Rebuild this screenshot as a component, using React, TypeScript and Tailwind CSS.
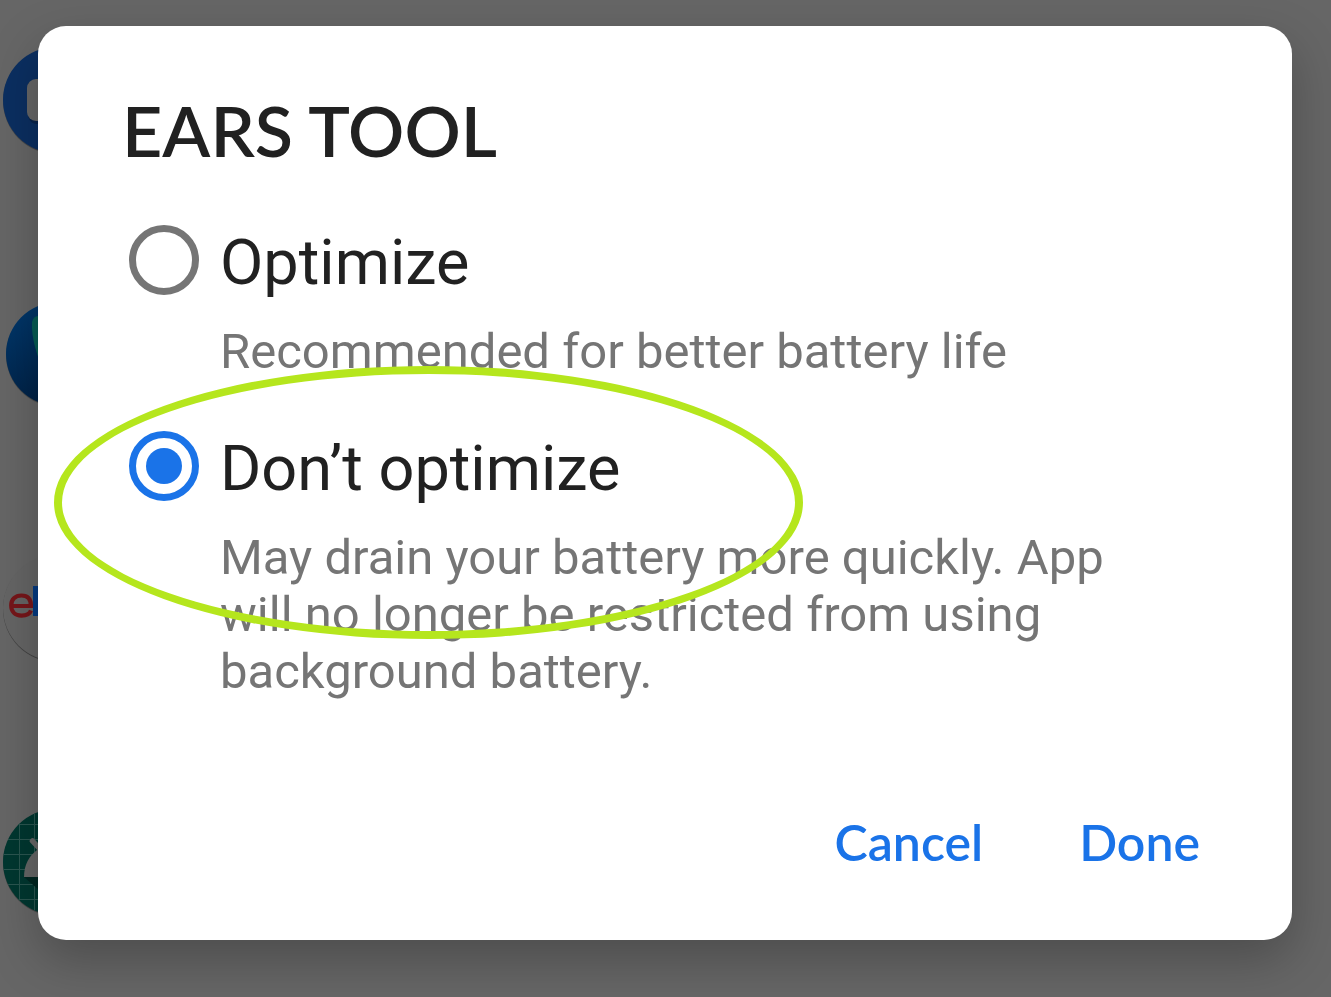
import { useState } from "react";

function MessagesIcon() {
  return (
    <svg className="h-[106px] w-[106px]" viewBox="0 0 106 106" aria-hidden="true">
      <circle cx="53" cy="54" r="53" fill="#484848" />
      <circle cx="53" cy="53" r="53" fill="#0b2f61" />
      <path d="M25 67c0 6 4 10 9 10h40V36H25z" fill="#08244b" />
      <rect x="24" y="32" width="58" height="42" rx="9" fill="#666666" />
    </svg>
  );
}

function LeafIcon() {
  return (
    <svg className="h-[106px] w-[106px]" viewBox="0 0 106 106" aria-hidden="true">
      <defs>
        <linearGradient id="leaf-sky" x1="0" y1="0" x2="0.6" y2="1">
          <stop offset="0" stopColor="#003a70" />
          <stop offset="1" stopColor="#001c3c" />
        </linearGradient>
      </defs>
      <circle cx="55" cy="54" r="52" fill="#4a4a4a" />
      <circle cx="55" cy="53" r="52" fill="url(#leaf-sky)" />
      <path d="M29 21c1-4 3-6 6-6h9v60C34 58 28 36 29 21z" fill="#065c54" />
    </svg>
  );
}

function EbayIcon() {
  return (
    <svg className="h-[106px] w-[106px]" viewBox="0 0 106 106" aria-hidden="true">
      <circle cx="53" cy="54" r="53" fill="#424242" />
      <circle cx="53" cy="53" r="53" fill="#656565" />
      <path d="M8 51H28C28 44 24.500 40.500 18.500 40.500C12 40.500 8.200 44.500 8.200 50.500S12 60.600 18.500 60.600C23.500 60.600 26.800 58.800 28 55.500" fill="none" stroke="#76161a" strokeWidth="4.200" />
      <rect x="30" y="31" width="12" height="30" fill="#053a80" />
    </svg>
  );
}

function AndroidIcon() {
  return (
    <svg className="h-[106px] w-[106px]" viewBox="0 0 106 106" aria-hidden="true">
      <defs>
        <clipPath id="android-disc">
          <circle cx="53" cy="53" r="53" />
        </clipPath>
      </defs>
      <circle cx="53" cy="54" r="53" fill="#484848" />
      <g clipPath="url(#android-disc)">
        <rect width="106" height="106" fill="#003730" />
        <path d="M16.500 0v106M31.500 0v106M46.500 0v106M0 15.500h106M0 30.500h106M0 45.500h106M0 60.500h106M0 75.500h106M0 90.500h106" stroke="#2b5650" strokeWidth="1" />
        <path d="M21 68l32 28h40V68z" fill="#002621" />
        <path d="M21 68c0-12 5-21 13-27l14-5v32z" fill="#666666" />
        <path d="M29.500 32l12 13" stroke="#666666" strokeWidth="5.500" strokeLinecap="round" />
      </g>
    </svg>
  );
}

const radioStyle =
  "h-[70px] w-[70px] shrink-0 appearance-none rounded-full border-[7px] border-[#757575] bg-clip-content p-[10px] checked:border-[#1a73e8] checked:bg-[#1a73e8]";

type OptionProps = {
  id: string;
  label: string;
  description: string;
  checked: boolean;
  onSelect: () => void;
};

function Option({ id, label, description, checked, onSelect }: OptionProps) {
  return (
    <div className="grid grid-cols-[auto_1fr] items-start gap-x-[21px]">
      <input
        id={id}
        type="radio"
        name="battery"
        checked={checked}
        onChange={onSelect}
        aria-describedby={id + "-note"}
        className={radioStyle}
      />
      <label htmlFor={id} className="text-[63px] leading-[76px] text-[#212121]">
        {label}
      </label>
      <p id={id + "-note"} className="col-start-2 mt-[22px] text-[49px] leading-[57px] text-[#757575]">
        {description}
      </p>
    </div>
  );
}

export default function App() {
  const [choice, setChoice] = useState("dont");

  return (
    <div className="grid min-h-screen grid-cols-1 overflow-hidden bg-[#666666] font-['Roboto',sans-serif]">
      <div className="col-start-1 row-start-1 flex flex-col gap-[148px] pt-[47px] pl-[3px]">
        <MessagesIcon />
        <LeafIcon />
        <EbayIcon />
        <AndroidIcon />
      </div>

      <main
        role="dialog"
        aria-labelledby="dialog-title"
        className="col-start-1 row-start-1 mt-[26px] mr-[39px] ml-[38px] self-start rounded-[28px] bg-white px-[84px] pt-[60px] pb-[58px] shadow-[0_20px_50px_rgba(0,0,0,0.25)]"
      >
        <h1 id="dialog-title" className="font-['Lato',sans-serif] text-[70px] leading-[88px] font-semibold text-[#212121]">
          EARS TOOL
        </h1>

        <div role="radiogroup" aria-labelledby="dialog-title" className="mt-[51px] flex flex-col gap-[51px] pr-[40px] pl-[7px]">
          <Option
            id="optimize"
            label="Optimize"
            description="Recommended for better battery life"
            checked={choice === "optimize"}
            onSelect={() => setChoice("optimize")}
          />
          <div className="relative">
            <Option
              id="dont-optimize"
              label="Don’t optimize"
              description="May drain your battery more quickly. App will no longer be restricted from using background battery."
              checked={choice === "dont"}
              onSelect={() => setChoice("dont")}
            />
            <div className="pointer-events-none absolute -top-[65px] -left-[75px] h-[273px] w-[749px] rounded-[50%] border-8 border-[#b5e61d]" />
          </div>
        </div>

        <div className="mt-[102px] flex justify-end gap-[96px] px-[8px] font-['Lato',sans-serif] text-[50px] leading-[80px] font-semibold text-[#1a73e8]">
          <button type="button">Cancel</button>
          <button type="button">Done</button>
        </div>
      </main>
    </div>
  );
}
